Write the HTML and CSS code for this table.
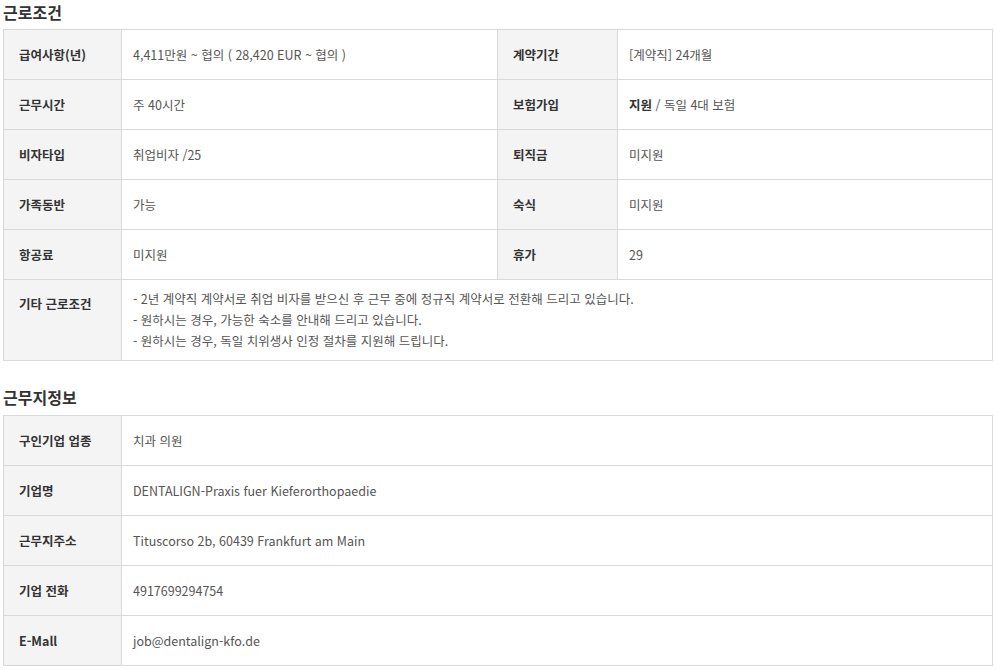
FILE: index.html
```html
<!DOCTYPE html>
<html lang="ko">
<head>
<meta charset="utf-8">
<link rel="stylesheet" href="styles.css">
</head>
<body>
<div class="page">
  <section class="sec">
    <h2 class="title">근로조건</h2>
    <table class="info">
      <colgroup><col class="c1"><col class="c2"><col class="c3"><col class="c4"></colgroup>
      <tr><th>급여사항(년)</th><td>4,411만원 ~ 협의 ( 28,420 EUR ~ 협의 )</td><th>계약기간</th><td>[계약직] 24개월</td></tr>
      <tr><th>근무시간</th><td>주 40시간</td><th>보험가입</th><td><b>지원</b> / 독일 4대 보험</td></tr>
      <tr><th>비자타입</th><td>취업비자 /25</td><th>퇴직금</th><td>미지원</td></tr>
      <tr><th>가족동반</th><td>가능</td><th>숙식</th><td>미지원</td></tr>
      <tr><th>항공료</th><td>미지원</td><th>휴가</th><td>29</td></tr>
      <tr class="multi"><th>기타 근로조건</th><td colspan="3">- 2년 계약직 계약서로 취업 비자를 받으신 후 근무 중에 정규직 계약서로 전환해 드리고 있습니다.<br>- 원하시는 경우, 가능한 숙소를 안내해 드리고 있습니다.<br>- 원하시는 경우, 독일 치위생사 인정 절차를 지원해 드립니다.</td></tr>
    </table>
  </section>
  <section class="sec sec2">
    <h2 class="title">근무지정보</h2>
    <table class="info">
      <colgroup><col class="c1"><col></colgroup>
      <tr><th>구인기업 업종</th><td>치과 의원</td></tr>
      <tr><th>기업명</th><td>DENTALIGN-Praxis fuer Kieferorthopaedie</td></tr>
      <tr><th>근무지주소</th><td>Tituscorso 2b, 60439 Frankfurt am Main</td></tr>
      <tr><th>기업 전화</th><td>4917699294754</td></tr>
      <tr><th>E-Mall</th><td>job@dentalign-kfo.de</td></tr>
    </table>
  </section>
</div>
</body>
</html>
```
FILE: styles.css
```css
html, body {
  margin: 0;
  padding: 0;
  background: #fff;
}
body {
  font-family: "Noto Sans CJK KR", "Noto Sans", sans-serif;
  color: #444;
  font-size: 12.5px;
}
.page {
  padding: 2px 3px 0 3px;
  width: 989px;
}
.title {
  margin: 0;
  font-size: 16px;
  line-height: 20px;
  font-weight: bold;
  color: #333;
}
.info {
  margin-top: 7px;
  width: 990px;
  border-collapse: collapse;
  table-layout: fixed;
  border: 1px solid #d9d9d9;
}
.sec2 {
  margin-top: 26px;
}
.sec2 .info {
  margin-top: 8px;
}
.c1 { width: 118px; }
.c2 { width: 376px; }
.c3 { width: 120px; }
.info th, .info td {
  border: 1px solid #d9d9d9;
  height: 49px;
  padding: 0;
  line-height: 20px;
  text-align: left;
  vertical-align: middle;
  font-size: 12.5px;
}
.info th {
  background: #f4f4f4;
  font-weight: bold;
  color: #333;
  padding-left: 15px;
}
.info td {
  color: #555;
  padding-left: 11px;
}
.info td b {
  font-weight: bold;
  color: #333;
}
.info .multi th, .info .multi td {
  vertical-align: top;
  line-height: 21px;
}
.info .multi th {
  padding-top: 13px;
}
.info .multi td {
  padding-top: 8px;
  padding-bottom: 9px;
  height: auto;
}
```
